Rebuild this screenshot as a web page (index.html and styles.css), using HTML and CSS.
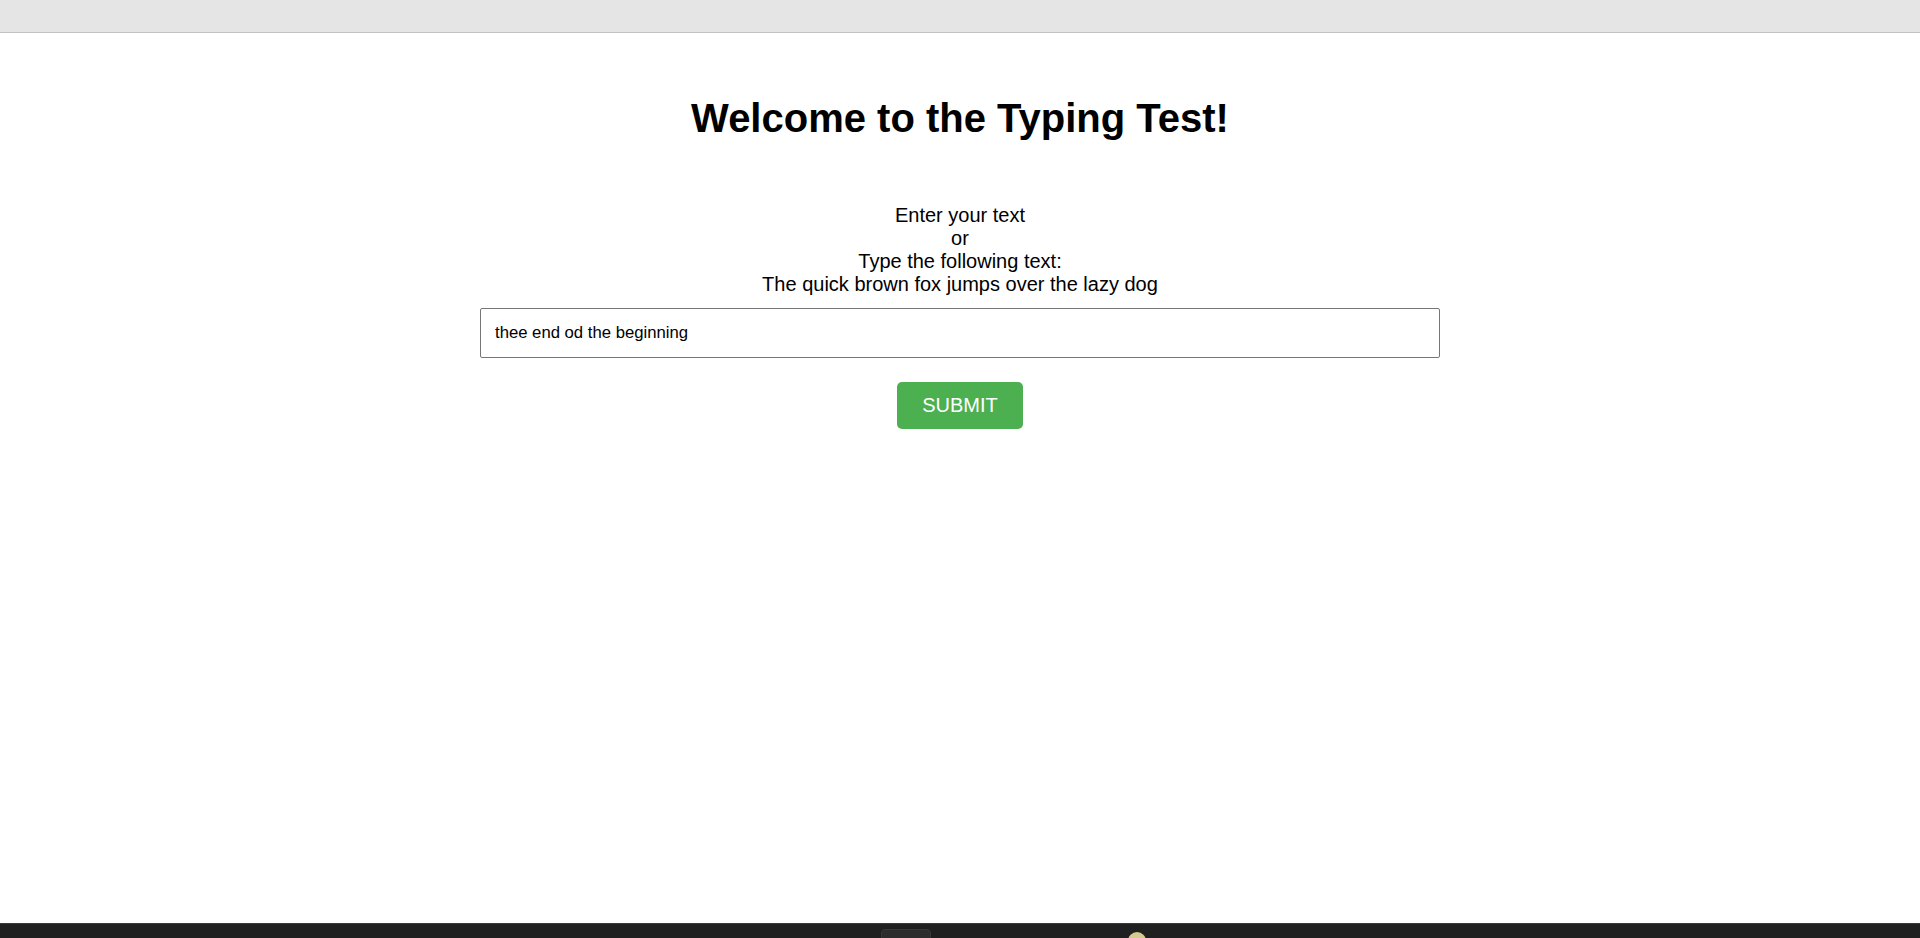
FILE: index.html
```html
<!DOCTYPE html>
<html lang="en">
<head>
<meta charset="utf-8">
<title>Typing Test</title>
<link rel="stylesheet" href="styles.css">
</head>
<body>
<div class="topbar"></div>
<main class="main">
  <h1 class="title">Welcome to the Typing Test!</h1>
  <div class="prompt">
    <div>Enter your text</div>
    <div>or</div>
    <div>Type the following text:</div>
    <div>The quick brown fox jumps over the lazy dog</div>
  </div>
  <input class="entry" type="text" value="thee end od the beginning">
  <button class="submit" type="button">SUBMIT</button>
</main>
<div class="taskbar">
  <div class="tile"></div>
  <div class="dot"></div>
</div>
</body>
</html>
```
FILE: styles.css
```css
html, body {
  margin: 0;
  padding: 0;
  height: 100%;
}
body {
  display: flex;
  flex-direction: column;
  overflow: hidden;
  background: #ffffff;
  font-family: "Liberation Sans", Arial, sans-serif;
  color: #000;
}
.topbar {
  flex: 0 0 32px;
  background: #e5e5e5;
  border-bottom: 1px solid #c3c3c3;
}
.main {
  flex: 1 1 auto;
  display: flex;
  flex-direction: column;
  align-items: center;
  min-height: 0;
}
.title {
  margin: 62px 0 0;
  font-size: 40px;
  font-weight: bold;
  line-height: 46px;
}
.prompt {
  margin-top: 63px;
  font-size: 20px;
  line-height: 23px;
  text-align: center;
}
.entry {
  box-sizing: border-box;
  margin-top: 12px;
  width: 960px;
  height: 50px;
  padding: 0 14px;
  border: 1px solid #767676;
  border-radius: 2px;
  font-family: "Liberation Sans", Arial, sans-serif;
  font-size: 16.7px;
  color: #000;
  background: #fff;
  outline: none;
}
.submit {
  margin-top: 24px;
  width: 126px;
  height: 47px;
  padding: 0;
  border: none;
  border-radius: 5px;
  background: #4caf50;
  color: #fff;
  font-family: "Liberation Sans", Arial, sans-serif;
  font-size: 20px;
}
.taskbar {
  flex: 0 0 14px;
  background: #202020;
  border-top: 1px solid #3a3a3a;
  display: flex;
  align-items: flex-start;
  padding-left: 881px;
  overflow: hidden;
}
.tile {
  margin-top: 5px;
  width: 50px;
  height: 20px;
  background: #2d2d2d;
  border: 1px solid #383838;
  border-radius: 4px;
  box-sizing: border-box;
}
.dot {
  margin-left: 197px;
  margin-top: 8px;
  width: 18px;
  height: 18px;
  border-radius: 50%;
  background: #d6cb8e;
}
```
